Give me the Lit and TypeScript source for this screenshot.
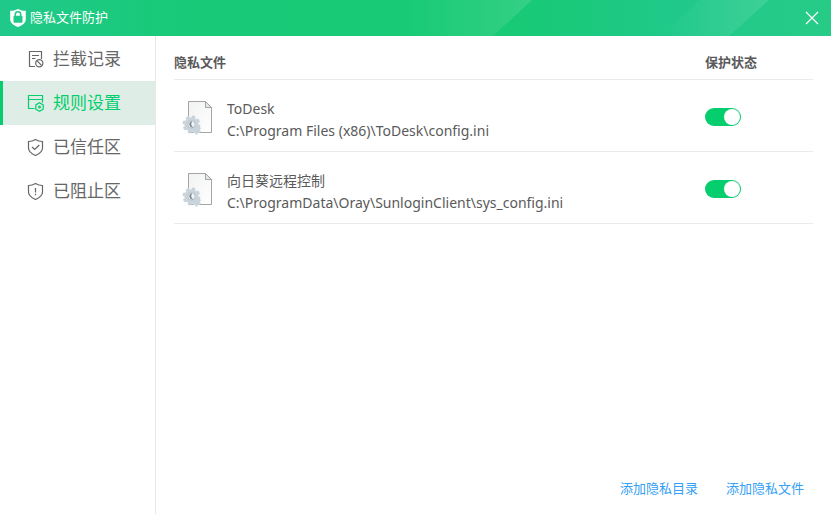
import { LitElement, html, css, svg } from "lit";
import { customElement, property, state } from "lit/decorators.js";
import { classMap } from "lit/directives/class-map.js";

const shieldOutline = svg`<path d="M8.500 1.500C10.800 3 13.100 3.500 15.500 3.500V10C15.500 13.500 12.500 15.800 8.500 17.500C4.500 15.800 1.500 13.500 1.500 10V3.500C3.900 3.500 6.200 3 8.500 1.500Z"/>`;

const icons: Record<string, unknown> = {
  log: svg`<path d="M14.500 9V1.500H2.500V16.500H8M5 5.500H12M5 8.500H8.500"/><circle cx="12.300" cy="13.200" r="3.600"/><path d="M9.800 10.700L14.800 15.700"/>`,
  rules: svg`<path d="M15.500 8.500V1.500H1.500V14.500H7.500M1.500 5.500H15.500"/><path d="M12.500 8.800L16.200 10.900V15.200L12.500 17.300L8.800 15.200V10.900Z"/><circle cx="12.500" cy="13" r="0.900"/>`,
  trusted: svg`${shieldOutline}<path d="M5 9L7.700 11.500L12.300 7"/>`,
  blocked: svg`${shieldOutline}<path d="M8.500 6V10.500M8.500 11.800V13.300"/>`,
};

const teeth = [0, 45, 90, 135, 180, 225, 270, 315];

@customElement("config-file-icon")
export class ConfigFileIcon extends LitElement {
  static styles = css`
    :host { display: block; width: 32px; height: 36px; }
    .art { display: block; }
  `;
  render() {
    return html`<svg class="art" width="32" height="36" viewBox="0 0 32 36" aria-hidden="true">
      <defs>
        <linearGradient id="sheet" x1="0" y1="0" x2="1" y2="1">
          <stop offset="0" stop-color="#f1f2f3"></stop>
          <stop offset="1" stop-color="#ffffff"></stop>
        </linearGradient>
      </defs>
      <path d="M6.500 1.500H23.500L29.500 7.500V32.500H6.500Z" fill="url(#sheet)" stroke="#a2a4a6"></path>
      <path d="M23.500 1.500V7.500H29.500Z" fill="#e4e6e8" stroke="#a2a4a6"></path>
      <g fill="#c9d4dc">
        <g transform="translate(14.500 30)">
          ${[0, 60, 120, 180, 240, 300].map((a) => svg`<rect x="-1.200" y="-4.500" width="2.400" height="3" transform="rotate(${a})"/>`)}
          <circle r="3.200"></circle>
        </g>
        <g transform="translate(9.500 24.500)">
          ${teeth.map((a) => svg`<rect x="-1.900" y="-9" width="3.800" height="4" rx="1" transform="rotate(${a + 15})"/>`)}
          <circle r="7"></circle>
        </g>
      </g>
      <circle cx="9.500" cy="24.500" r="4" fill="#b9c5ce"></circle>
      <circle cx="9.500" cy="24.500" r="3" fill="#f2f5f7"></circle>
      <path d="M9.500 21.500A3 3 0 0 0 10.500 27.300Q7.800 24.500 9.500 21.500Z" fill="#78838c" stroke="#78838c" stroke-width="0.600"></path>
    </svg>`;
  }
}

@customElement("toggle-switch")
export class ToggleSwitch extends LitElement {
  @property({ type: Boolean }) checked = false;
  @property() label = "";

  static styles = css`
    :host { display: block; width: 36px; height: 18px; }
    .switch {
      appearance: none;
      display: block;
      box-sizing: border-box;
      width: 36px;
      height: 18px;
      margin: 0;
      padding: 1px;
      border-radius: 9px;
      background: #c8c8c8;
      cursor: pointer;
    }
    .switch::before {
      content: "";
      display: block;
      width: 16px;
      height: 16px;
      border-radius: 50%;
      background: #fff;
    }
    .switch:checked { background: #06cd6d; }
    .switch:checked::before { margin-left: auto; }
  `;
  render() {
    return html`<input class="switch" type="checkbox" role="switch" aria-label=${this.label} .checked=${this.checked}
      @change=${(e: Event) => (this.checked = (e.target as HTMLInputElement).checked)} />`;
  }
}

@customElement("app-root")
export class AppRoot extends LitElement {
  @state() private section = "rules";

  private sections = [
    { id: "log", label: "拦截记录" },
    { id: "rules", label: "规则设置" },
    { id: "trusted", label: "已信任区" },
    { id: "blocked", label: "已阻止区" },
  ];

  private files = [
    { name: "ToDesk", path: "C:\\Program Files (x86)\\ToDesk\\config.ini" },
    { name: "向日葵远程控制", path: "C:\\ProgramData\\Oray\\SunloginClient\\sys_config.ini" },
  ];

  static styles = css`
    :host {
      display: flex;
      flex-direction: column;
      min-height: 100vh;
      background: #fff;
      color: #5a5a5a;
      font: 13px/22px "Noto Sans", "Noto Sans CJK SC", sans-serif;
    }
    .titlebar {
      position: relative;
      display: flex;
      align-items: center;
      height: 36px;
      box-sizing: border-box;
      padding: 0 12px 0 10px;
      gap: 4px;
      background: linear-gradient(90deg, #20c98a 0%, #18ca78 22%, #17ca73 60%, #20c98a 82%, #26cb86 100%);
      color: #fff;
    }
    .shine { position: absolute; top: 0; right: 0; width: 431px; height: 36px; }
    .title { flex: 1; margin: 0; padding-bottom: 2px; font-size: 13px; font-weight: 400; }
    .close {
      position: relative;
      display: block;
      width: 14px;
      height: 14px;
      padding: 0;
      border: 0;
      background: none;
      color: inherit;
      cursor: pointer;
    }
    .glyph { display: block; }
    .body { flex: 1; display: flex; }
    .sidebar {
      flex: none;
      width: 155px;
      padding-top: 1px;
      border-right: 1px solid #e8e8e8;
    }
    .item {
      display: flex;
      align-items: center;
      gap: 8px;
      box-sizing: border-box;
      width: 100%;
      height: 44px;
      padding: 0 0 0 24px;
      border: 0;
      border-left: 3px solid transparent;
      background: none;
      color: #666;
      font: inherit;
      font-size: 17px;
      cursor: pointer;
    }
    .item.active { border-left-color: #06cd6d; background: #deede5; color: #06cd6d; }
    .content {
      flex: 1;
      display: flex;
      flex-direction: column;
      justify-content: space-between;
      padding: 0 18px 15px;
    }
    .files { width: 100%; border-collapse: separate; border-spacing: 0; table-layout: fixed; }
    .head {
      height: 44px;
      padding: 8px 0 0;
      box-sizing: border-box;
      border-bottom: 1px solid #ebebeb;
      font-weight: 700;
      text-align: left;
    }
    .head.state { width: 108px; }
    .cell {
      box-sizing: border-box;
      height: 72px;
      padding: 8px 0 0;
      border-bottom: 1px solid #ebebeb;
      vertical-align: middle;
    }
    .cell.state { padding-top: 2px; }
    .file { display: flex; align-items: center; gap: 13px; padding-left: 8px; font-size: 14px; }
    .sheet { padding-bottom: 4px; }
    .actions { display: flex; justify-content: flex-end; gap: 28px; padding-right: 9px; }
    .link { color: #35a0f4; text-decoration: none; }
  `;

  render() {
    return html`
      <header class="titlebar">
        <svg class="shine" viewBox="0 0 431 36" aria-hidden="true">
          <defs>
            <linearGradient id="beam">
              <stop offset="0" stop-color="#fff" stop-opacity="0"></stop>
              <stop offset="1" stop-color="#fff" stop-opacity="0.120"></stop>
            </linearGradient>
          </defs>
          <path d="M0 0H132L93 36H0Z" fill="url(#beam)"></path>
          <path d="M300 0H369L329 36H260Z" fill="url(#beam)"></path>
        </svg>
        <svg class="glyph" width="16" height="18" viewBox="0 0 16 18" aria-hidden="true">
          <path d="M8 0C10.500 1.400 13 1.800 15.800 1.800V10.500C15.800 14 12 16.500 8 18C4 16.500 0.200 14 0.200 10.500V1.800C3 1.800 5.500 1.400 8 0Z" fill="#fff"></path>
          <path d="M5.300 7V5.500A2.700 2.700 0 0 1 10.700 5.500V7" fill="none" stroke="#1fc987" stroke-width="1.500"></path>
          <rect x="3.500" y="6.700" width="9" height="7" rx="1" fill="#1fc987"></rect>
        </svg>
        <h1 class="title">隐私文件防护</h1>
        <button class="close" aria-label="关闭">
          <svg class="glyph" width="14" height="14" viewBox="0 0 14 14" fill="none" stroke="currentColor" stroke-width="1.200">
            <path d="M1 1L13 13M13 1L1 13"></path>
          </svg>
        </button>
      </header>
      <div class="body">
        <nav class="sidebar">
          ${this.sections.map(
            (s) => html`<button class=${classMap({ item: true, active: s.id === this.section })} @click=${() => (this.section = s.id)}>
              <svg class="glyph" width="18" height="18" viewBox="0 0 18 18" fill="none" stroke="currentColor" stroke-width="1.200" aria-hidden="true">${icons[s.id]}</svg>
              <span>${s.label}</span>
            </button>`
          )}
        </nav>
        <main class="content">
          <table class="files">
            <thead>
              <tr><th class="head" scope="col">隐私文件</th><th class="head state" scope="col">保护状态</th></tr>
            </thead>
            <tbody>
              ${this.files.map(
                (f) => html`<tr>
                  <td class="cell">
                    <div class="file">
                      <div class="sheet"><config-file-icon></config-file-icon></div>
                      <div><div>${f.name}</div><div>${f.path}</div></div>
                    </div>
                  </td>
                  <td class="cell state"><toggle-switch checked label=${f.name}></toggle-switch></td>
                </tr>`
              )}
            </tbody>
          </table>
          <footer class="actions">
            <a class="link" href="#add-folder">添加隐私目录</a>
            <a class="link" href="#add-file">添加隐私文件</a>
          </footer>
        </main>
      </div>
    `;
  }
}
